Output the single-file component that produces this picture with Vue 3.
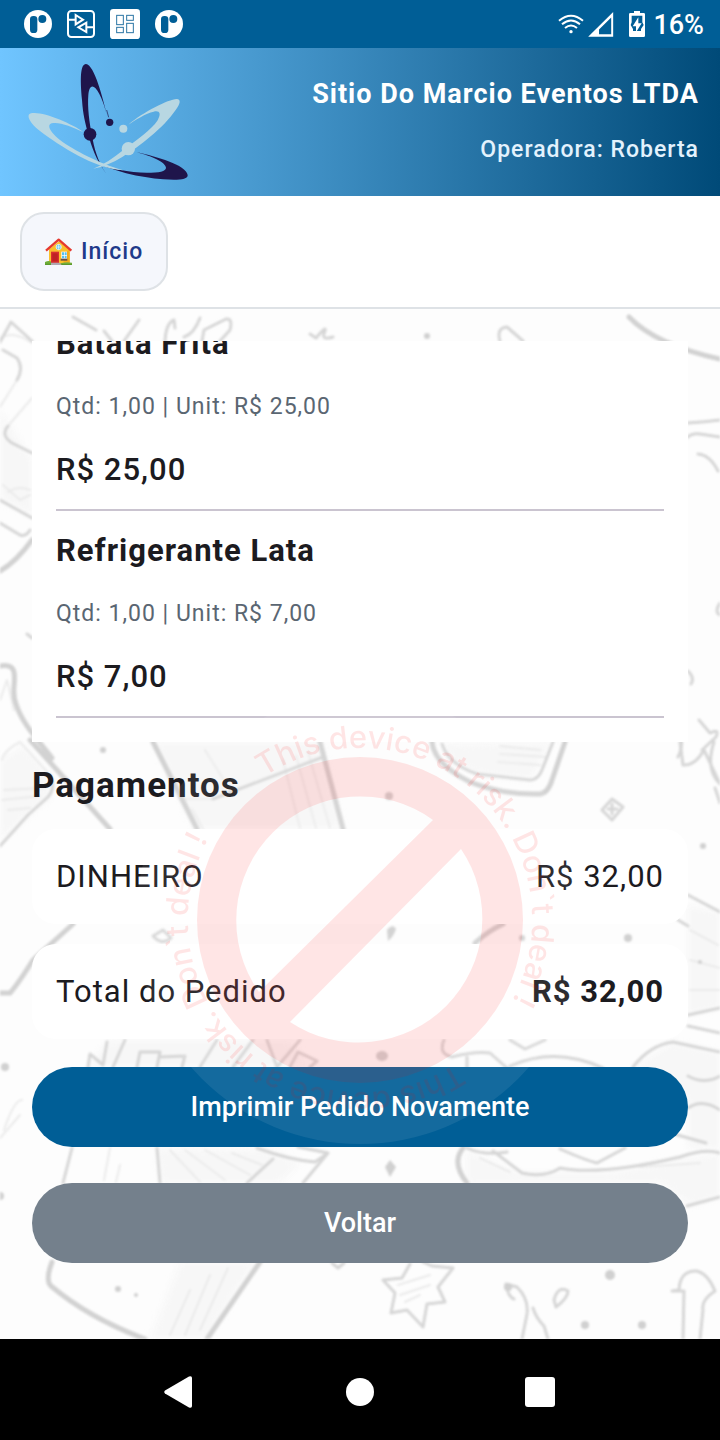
<script setup>
const company = 'Sitio Do Marcio Eventos LTDA'
const operator = 'Operadora: Roberta'

const items = [
  { name: 'Batata Frita', detail: 'Qtd: 1,00 | Unit: R$ 25,00', total: 'R$ 25,00' },
  { name: 'Refrigerante Lata', detail: 'Qtd: 1,00 | Unit: R$ 7,00', total: 'R$ 7,00' },
]

const payments = [{ method: 'DINHEIRO', value: 'R$ 32,00' }]
const orderTotal = 'R$ 32,00'
const warning = 'This device at risk. Don`t deal !'
</script>

<template>
  <div class="screen">
    <div class="status">
      <div class="status-group left">
        <svg v-for="n in 2" :key="n" :class="['app-dot', 'pos' + n]" viewBox="0 0 84 84" width="28" height="28" aria-hidden="true">
          <circle cx="42" cy="42" r="42" fill="#fff" />
          <rect x="18" y="18" width="22" height="51" rx="10" fill="#005e96" />
          <circle cx="55" cy="27" r="12" fill="#005e96" />
        </svg>
        <svg class="pos-flow" viewBox="0 0 84 84" width="28" height="28" fill="none" stroke="#fff" stroke-width="6" aria-hidden="true">
          <rect x="3" y="3" width="78" height="78" rx="10" />
          <path d="M3 29H26M26 15V43L48 29ZM81 52H58M58 38V66L34 52Z" />
        </svg>
        <svg class="pos-grid" viewBox="0 0 90 90" width="30" height="30" aria-hidden="true">
          <rect width="90" height="90" rx="10" fill="#fff" />
          <g fill="none" stroke="#2a75a4" stroke-width="3">
            <rect x="20" y="19" width="20" height="28" />
            <rect x="50" y="19" width="20" height="15" />
            <rect x="20" y="55" width="20" height="16" />
            <rect x="50" y="43" width="20" height="28" />
          </g>
        </svg>
      </div>
      <div class="status-group right">
        <svg viewBox="0 0 78 60" width="26" height="20" fill="none" stroke="#fff" stroke-width="6" aria-hidden="true">
          <path d="M3 20Q39 -10 75 20M12 31Q39 8 66 31M21 42Q39 27 57 42" />
          <circle cx="39" cy="53" r="5" fill="#fff" stroke="none" />
        </svg>
        <svg class="signal" viewBox="0 0 78 76" width="26" height="25" aria-hidden="true">
          <path d="M0 75L76 0V75ZM33 68H70V17L33 53Z" fill="#fff" fill-rule="evenodd" />
        </svg>
        <svg class="battery" viewBox="0 0 48 78" width="16" height="26" aria-hidden="true">
          <path d="M15 0H33V6H44Q48 6 48 10V74Q48 78 44 78H4Q0 78 0 74V10Q0 6 4 6H15Z" fill="#fff" />
          <path d="M8 14H40V34L44 42L36 54V60H12V54L5 42L8 34Z" fill="#005e96" />
          <path d="M28 19L11 46H21V64L38 37H28Z" fill="#fff" />
        </svg>
        <span class="percent">16%</span>
      </div>
    </div>

    <header class="brand">
      <svg class="logo" viewBox="78 186 492 360" width="164" height="120" role="img" aria-label="Logo">
        <g fill="#1f154b">
          <path d="M322 348C308 295 284 195 258 192C241 192 240 235 246 300C249 345 256 370 264 400C274 440 288 478 317 519C292 480 282 445 276 405C268 370 262 320 265 285C267 260 276 254 286 264C304 284 314 322 322 348Z" />
          <path d="M410 457C470 470 558 495 563 525C565 540 530 541 490 538C420 532 340 516 258 474C330 510 390 517 440 518C478 518 498 514 498 503C496 486 454 468 410 457Z" />
          <circle cx="270" cy="403" r="19" />
          <circle cx="329" cy="367" r="11" />
          <path d="M320 330L326 352" stroke="#1f154b" stroke-width="2" />
        </g>
        <g fill="#b8d7e2">
          <path d="M250 396C215 370 125 332 93 340C76 344 90 370 120 393C180 438 280 505 370 511C300 492 220 450 180 420C150 396 139 375 155 370C176 364 215 380 250 396Z" />
          <path d="M385 374C430 336 505 298 530 297C544 298 541 311 527 330C490 384 420 438 368 470C338 488 310 500 280 506C310 494 340 475 370 450C410 420 454 390 473 361C485 339 478 331 461 335C438 340 405 360 385 374Z" />
          <circle cx="370" cy="386" r="12" />
          <circle cx="385" cy="446" r="20" />
        </g>
      </svg>
      <div class="brand-text">
        <h1>{{ company }}</h1>
        <p>{{ operator }}</p>
      </div>
    </header>

    <nav class="menu">
      <button type="button" class="home">
        <svg viewBox="0 0 84 84" width="28" height="28" aria-hidden="true">
          <path d="M12 34L42 10L74 34V78H12Z" fill="#fbc02d" />
          <path d="M56 48L74 34V78H56Z" fill="#f5ab1c" />
          <path d="M0 72Q12 66 20 72L24 80H0Z" fill="#6fae3a" />
          <path d="M48 76Q64 70 81 74V80H48Z" fill="#7cb342" />
          <path d="M0 77H81V81H0Z" fill="#5c9a2c" />
          <rect x="18" y="41" width="24" height="34" fill="#d8302f" />
          <rect x="22" y="46" width="16" height="24" fill="#c02224" />
          <path d="M18 74H44L50 81H18Z" fill="#b0a7b0" />
          <rect x="49" y="41" width="17" height="22" fill="#fff" />
          <path d="M51 43H57V51H51ZM59 43H65V51H59ZM51 53H57V61H51ZM59 53H65V61H59Z" fill="#58c1ee" />
          <rect x="47" y="62" width="20" height="6" fill="#6d4c41" />
          <circle cx="41" cy="27" r="8" fill="#58c1ee" stroke="#fff" stroke-width="2" />
          <path d="M41 19V35M33 27H49" stroke="#fff" stroke-width="2" />
          <path d="M3 38L41 5L79 38" fill="none" stroke="#e5392f" stroke-width="7" stroke-linejoin="round" />
        </svg>
        <span>Início</span>
      </button>
    </nav>

    <main class="content">
      <svg class="doodles" viewBox="0 309 720 1030" preserveAspectRatio="xMidYMin slice" aria-hidden="true">
        <g class="shade">
          <path d="M153 742H320L343 829H195Z" />
          <path d="M442 744L450 761L477 774L530 780L553 742Z" />
          <path d="M0 410L32 460V515L0 500Z" />
          <path d="M688 905L720 912V1008L688 1015Z" />
          <path d="M0 760L24 745L50 775V797L0 840Z" />
          <path d="M157 1148L267 1149L300 1163L280 1183H160Z" />
          <path d="M180 1262H255L207 1339H150Z" />
          <path d="M467 1150L517 1172L610 1172L720 1153V1197L690 1205L660 1183H467Z" />
          <path d="M88 1067L110 1040H290L310 1067Z" />
          <path d="M633 1067L673 1042L720 1052V1150L688 1148V1100Z" />
        </g>
        <g class="fine">
          <path d="M283 760L300 828M296 756L316 828M308 752L330 828M205 750L230 790M4 790L44 788M2 800L40 796M8 810L30 808" />
          <path d="M170 1150L200 1182M185 1150L225 1180M205 1150L250 1175M232 1153L262 1165M190 1290L170 1335M210 1275L185 1335M228 1268L200 1330" />
          <path d="M500 746L540 750M500 754L546 757M498 762L540 765M690 930L718 945M690 960L720 968M690 990L720 990M480 1158L510 1172M640 1167L700 1163" />
          <path d="M3 485L20 500L30 495M8 492Q18 485 30 490M110 1148L104 1180M120 1165L116 1182M0 1138L20 1115M4 1130Q14 1100 22 1100" />
          <path d="M398 1285L430 1275M400 1295L430 1285M405 1302L420 1295" />
          <path d="M0 342L11 322L32 341M0 338Q14 330 32 343M3 350L17 358Q24 368 17 380L0 407M32 398L8 426Q0 435 12 443L32 453M0 700L7 680L14 710" />
          <path d="M2 760Q4 750 20 742L50 775Q56 788 48 797L28 815M183 799H213L323 757M192 809L203 829" />
        </g>
        <g class="line">
          <path d="M0 342L11 322L32 341M3 350L17 358Q24 368 17 380M8 426Q0 435 12 443L32 453M0 500L32 518M0 523L20 535Q26 537 30 530" />
          <path d="M27 634L32 638M50 775Q56 788 48 797L28 815L0 846M213 799L323 757" />
          <path d="M153 936L163 930L171 938Q162 946 153 936" />
          <path d="M73 317L96 330M104 331L112 341M139 320L124 341M165 341Q166 323 174 320L175 328M200 318Q194 334 184 337M202 341L204 330L226 319Q233 318 230 330L220 341" />
          <path d="M310 334L316 338Q327 325 325 331Q320 341 333 337M500 341Q496 328 507 327L523 341" />
          <path d="M688 423Q705 422 720 420M688 437Q692 433 700 434L720 437M698 454Q710 455 718 471M720 603Q714 612 720 615M688 671Q695 678 691 684M681 735Q683 748 678 757" />
          <path d="M699 720L710 733Q720 728 716 737L702 750M680 742L683 765Q695 766 704 750L720 784M714 742Q705 770 720 784M715 788L720 803" />
          <path d="M442 744Q448 764 477 774L530 780Q538 780 542 770L553 742" />
          <path d="M602 810L612 799L623 807L612 820ZM608 809H617M612 804V814M688 895L720 912M678 920L688 926M688 1015L720 1008M688 1026L720 1033" />
          <path d="M444 1040Q438 1054 452 1057Q475 1051 490 1053L507 1068M467 1057V1068M510 1066Q555 1046 603 1068M633 1067Q650 1045 673 1042L720 1052M510 1040L525 1049L545 1040" />
          <path d="M467 1148Q484 1156 507 1152M493 1151L522 1173Q545 1178 560 1168Q600 1176 680 1157Q705 1148 720 1153M560 1149Q585 1160 597 1163L625 1148M687 1206L720 1197M688 1076Q704 1085 720 1076M688 1108Q702 1098 720 1110M660 1130L706 1143" />
          <path d="M88 1067L90 1054L103 1065L107 1042M113 1067L125 1040M137 1067L140 1052H160L157 1067M160 1057L185 1056L182 1067M200 1067L217 1040M233 1067L253 1040M267 1040L277 1067L300 1040M290 1067L298 1052L317 1061L310 1067" />
          <path d="M72 1148L63 1183M157 1148L160 1183M247 1183L273 1159M257 1148Q290 1160 315 1162L328 1153L298 1147M328 1153L303 1183" />
          <path d="M410 1264L402 1278L383 1280L395 1293L391 1313L407 1310L423 1327L427 1304L445 1302L438 1287L453 1268L432 1266L423 1262" />
          <path d="M506 1284Q508 1297 514 1299M506 1284L517 1287Q529 1299 527 1314L522 1339M533 1308Q536 1318 544 1326L548 1339M554 1300Q558 1285 568 1291Q568 1298 556 1307Z" />
          <path d="M683 1339L684 1291H672L679 1290Q680 1270 697 1271Q708 1274 715 1291Q701 1300 703 1310L700 1339M332 1263L338 1268L344 1263" />
        </g>
        <g class="bold">
          <path d="M0 571Q16 562 32 540M0 666Q12 664 14 672C16 684 11 692 16 704C22 724 40 742 52 758M30 740L110 829M153 742L197 829M320 742L343 829" />
          <path d="M73 924L33 960Q18 984 10 993H0M432 742Q434 764 470 782Q503 795 540 794Q548 793 552 780L565 742M629 317Q656 345 720 359M475 943Q488 931 503 924" />
          <path d="M463 1148Q451 1163 467 1183M52 1262Q45 1280 51 1286C76 1307 105 1324 145 1339M260 1262L207 1339" />
        </g>
        <g class="dots">
          <circle cx="427" cy="336" r="3" /><circle cx="389" cy="796" r="4" /><circle cx="103" cy="750" r="3" />
          <circle cx="703" cy="846" r="3" /><path d="M387 930Q393 923 396 929Q394 936 388 941Z" /><circle cx="628" cy="938" r="4" />
          <circle cx="522" cy="938" r="3" /><ellipse cx="382" cy="1056" rx="6" ry="5" /><circle cx="5" cy="1067" r="4" />
          <path d="M385 1167L390 1160L396 1167L390 1177Z" /><circle cx="610" cy="1275" r="5" /><circle cx="585" cy="1325" r="4" />
          <circle cx="642" cy="1325" r="4" /><circle cx="118" cy="1289" r="3" /><circle cx="136" cy="1295" r="2" />
          <circle cx="0" cy="1196" r="4" /><circle cx="700" cy="962" r="2" /><circle cx="508" cy="1287" r="4" />
        </g>
      </svg>

      <div class="items">
        <ul class="item-list">
          <li v-for="item in items" :key="item.name" class="item">
            <strong class="item-name">{{ item.name }}</strong>
            <span class="item-detail">{{ item.detail }}</span>
            <span class="item-total">{{ item.total }}</span>
          </li>
        </ul>
      </div>

      <h2>Pagamentos</h2>
      <div class="cards">
        <div v-for="p in payments" :key="p.method" class="card">
          <span>{{ p.method }}</span>
          <span>{{ p.value }}</span>
        </div>
        <div class="card">
          <span>Total do Pedido</span>
          <strong>{{ orderTotal }}</strong>
        </div>
      </div>

      <div class="actions">
        <button type="button" class="action primary">Imprimir Pedido Novamente</button>
        <button type="button" class="action neutral">Voltar</button>
      </div>

      <svg class="stamp" viewBox="-224 -224 448 448" width="448" height="448" aria-hidden="true">
        <defs>
          <path id="stamp-arc" d="M-96 -143A172 172 0 0 1 96 143A172 172 0 0 1 -96 -143" />
        </defs>
        <circle r="224" fill="#fff" fill-opacity="0.08" />
        <path
          fill="#f00"
          fill-opacity="0.1"
          fill-rule="evenodd"
          d="M-163 0A163 163 0 1 1 163 0A163 163 0 1 1 -163 0ZM73 -100A124 124 0 0 0 -101 72ZM101 -71A124 124 0 0 1 -70 102Z"
        />
        <text class="stamp-text"><textPath href="#stamp-arc">{{ warning }}</textPath></text>
        <text class="stamp-text" transform="rotate(180)"><textPath href="#stamp-arc">{{ warning }}</textPath></text>
      </svg>
    </main>

    <div class="system-nav">
      <button type="button" aria-label="Back">
        <svg viewBox="0 0 32 32" width="32" height="32"><path d="M1 14.500L25 .5Q28 -.5 28 2V30Q28 32.500 25 31.500L1 17.500Q-.5 16 1 14.500Z" fill="#fff" /></svg>
      </button>
      <button type="button" aria-label="Home">
        <svg viewBox="0 0 28 28" width="28" height="28"><circle cx="14" cy="14" r="14" fill="#fff" /></svg>
      </button>
      <button type="button" aria-label="Recents">
        <svg viewBox="0 0 30 30" width="30" height="30"><rect width="30" height="30" rx="3" fill="#fff" /></svg>
      </button>
    </div>
  </div>
</template>

<style>
body {
  background: #fdfdfd;
}
</style>

<style scoped>
.screen {
  display: flex;
  flex-direction: column;
  min-height: 100vh;
  font-family: Roboto, 'Noto Sans', sans-serif;
  color: #1c1b1f;
}
.screen * {
  box-sizing: border-box;
}
button {
  border: 0;
  font-family: inherit;
  cursor: pointer;
}
svg {
  display: block;
  flex: none;
}

.status {
  display: flex;
  justify-content: space-between;
  align-items: center;
  height: 48px;
  padding: 0 16px 0 24px;
  background: #005e96;
  color: #fff;
}
.status-group {
  display: flex;
  align-items: center;
}
.left {
  gap: 15px;
}
.pos1 {
  order: 1;
}
.pos-flow {
  order: 2;
}
.pos-grid {
  order: 3;
}
.pos2 {
  order: 4;
}
.signal {
  margin-left: 4px;
}
.battery {
  margin-left: 15px;
}
.percent {
  margin-left: 8px;
  padding-top: 2px;
  font-size: 27px;
  line-height: 32px;
  font-weight: 500;
}

.brand {
  display: flex;
  justify-content: space-between;
  align-items: center;
  height: 148px;
  padding: 0 21px 0 26px;
  background: linear-gradient(90deg, #70c5ff, #004a78);
  color: #fff;
}
.brand-text {
  display: flex;
  flex-direction: column;
  gap: 16px;
  text-align: right;
}
.brand h1 {
  margin: 0;
  font-size: 27px;
  line-height: 40px;
  font-weight: 700;
  letter-spacing: 1px;
}
.brand p {
  margin: 0;
  font-size: 23px;
  line-height: 40px;
  font-weight: 500;
  letter-spacing: 1px;
  color: #e3f2fd;
}

.menu {
  padding: 16px 20px;
  border-bottom: 2px solid #dee2e6;
  background: #fff;
}
.home {
  display: flex;
  align-items: center;
  gap: 8px;
  height: 79px;
  padding: 0 23px;
  border: 2px solid #dee2e6;
  border-radius: 24px;
  background: #f5f7fc;
  color: #1e3a8a;
  font-size: 23px;
  line-height: 32px;
  font-weight: 500;
  letter-spacing: 1px;
}

.content {
  position: relative;
  flex: 1;
  padding: 32px 32px 76px;
  background: #fdfdfd;
  overflow: hidden;
}
.doodles {
  position: absolute;
  inset: 0;
  width: 100%;
  height: 100%;
  fill: none;
  stroke-linecap: round;
  stroke-linejoin: round;
  filter: blur(1px);
}
.shade {
  fill: #f7f7f7;
  filter: blur(3px);
}
.fine {
  stroke: #ebebeb;
  stroke-width: 2;
}
.line {
  stroke: #d6d6d6;
  stroke-width: 3;
}
.bold {
  stroke: #d2d2d2;
  stroke-width: 5;
}
.dots {
  fill: #d0d0d0;
}
.items,
.content h2,
.cards,
.actions {
  position: relative;
}

/* Reversed column keeps the list scrolled to its last row. */
.items {
  display: flex;
  flex-direction: column-reverse;
  max-height: 401px;
  overflow-y: auto;
  scrollbar-width: none;
  background: #fff;
}
.item-list {
  margin: 0;
  padding: 24px;
  list-style: none;
}
.item {
  display: flex;
  flex-direction: column;
  padding: 16px 0 12px;
  border-bottom: 2px solid #cac4d0;
}
.item-name {
  font-size: 31px;
  line-height: 48px;
  font-weight: 700;
  letter-spacing: 1px;
}
.item-detail {
  margin: 8px 0 4px;
  font-size: 23px;
  line-height: 62px;
  letter-spacing: 1px;
  color: #5a6672;
}
.item-total {
  font-size: 31px;
  line-height: 55px;
  font-weight: 500;
  letter-spacing: 1px;
}

.content h2 {
  margin: 20px 0 19px;
  font-size: 35px;
  line-height: 48px;
  font-weight: 700;
  letter-spacing: 1px;
}
.cards {
  display: flex;
  flex-direction: column;
  gap: 20px;
}
.card {
  display: flex;
  justify-content: space-between;
  padding: 24px;
  border-radius: 24px;
  background: #fff;
  font-size: 31px;
  line-height: 47px;
  letter-spacing: 1px;
}
.actions {
  display: flex;
  flex-direction: column;
  gap: 36px;
  margin-top: 28px;
}
.action {
  height: 80px;
  border-radius: 40px;
  color: #fff;
  font-size: 27px;
  line-height: 40px;
  font-weight: 500;
}
.primary {
  background: #005e96;
}
.neutral {
  background: #74808c;
}

.stamp {
  position: absolute;
  top: 387px;
  left: 50%;
  margin-left: -224px;
  pointer-events: none;
}
.stamp-text {
  fill: #f00;
  fill-opacity: 0.1;
  font-family: Inter, sans-serif;
  font-size: 31px;
  font-weight: 500;
}

.system-nav {
  display: grid;
  grid-template-columns: repeat(3, 180px);
  justify-content: center;
  height: 101px;
  background: #000;
}
.system-nav button {
  display: grid;
  place-items: center;
  padding: 4px 0 0;
  background: none;
}
</style>
